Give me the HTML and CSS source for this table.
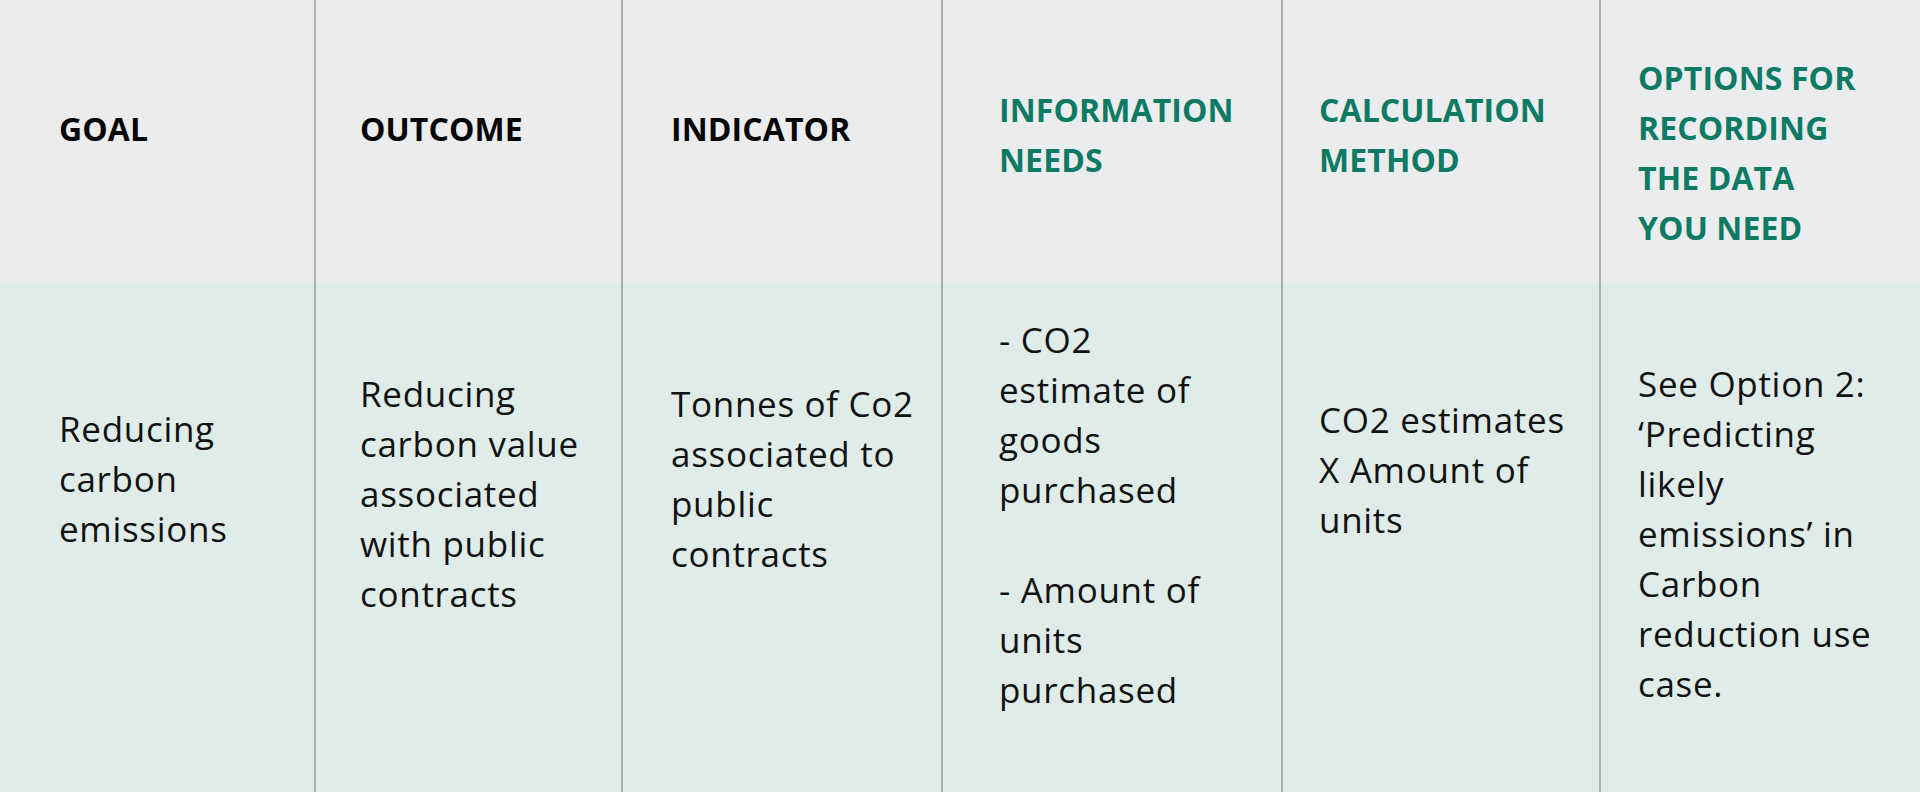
FILE: index.html
```html
<!DOCTYPE html>
<html lang="en">
<head>
<meta charset="utf-8">
<title>Carbon reduction indicators</title>
<link rel="stylesheet" href="styles.css">
</head>
<body>
<div class="table">
  <div class="cell head col1 h1l">GOAL</div>
  <div class="cell head col2 h1l">OUTCOME</div>
  <div class="cell head col3 h1l">INDICATOR</div>
  <div class="cell head col4 h2l green">INFORMATION<br>NEEDS</div>
  <div class="cell head col5 h2l green">CALCULATION<br>METHOD</div>
  <div class="cell head col6 h4l green">OPTIONS FOR<br>RECORDING<br>THE DATA<br>YOU NEED</div>

  <div class="cell data col1 b1">Reducing<br>carbon<br>emissions</div>
  <div class="cell data col2 b2">Reducing<br>carbon value<br>associated<br>with public<br>contracts</div>
  <div class="cell data col3 b3">Tonnes of Co2<br>associated to<br>public<br>contracts</div>
  <div class="cell data col4 b4">
    <p class="para">- CO2<br>estimate of<br>goods<br>purchased</p>
    <p class="para">- Amount of<br>units<br>purchased</p>
  </div>
  <div class="cell data col5 b5">CO2 estimates<br>X Amount of<br>units</div>
  <div class="cell data col6 b6">See Option 2:<br>‘Predicting<br>likely<br>emissions’ in<br>Carbon<br>reduction use<br>case.</div>
</div>
</body>
</html>
```

FILE: styles.css
```css
html, body {
  margin: 0;
  padding: 0;
}

body {
  font-family: "Open Sans", "Noto Sans", "Liberation Sans", sans-serif;
  background: #e0ece9;
  overflow: hidden;
}

.table {
  display: grid;
  grid-template-columns: 316px 307px 320px 340px 318px 1fr;
  grid-template-rows: 283px 509px;
  width: 1920px;
  height: 792px;
}

.cell {
  box-sizing: border-box;
  border-right: 2px solid #adaeae;
  white-space: nowrap;
}

.cell:nth-child(6n) {
  border-right: none;
}

.head {
  background: #ebecee;
  color: #050505;
  font-weight: 700;
  font-size: 32px;
  line-height: 50px;
  letter-spacing: 0.1px;
}

.data {
  background: #e0ece9;
  color: #121212;
  font-weight: 400;
  font-size: 35px;
  line-height: 50px;
  letter-spacing: 0.7px;
}

.green {
  color: #0d7a64;
}

.para {
  margin: 0 0 50px 0;
}

.para:last-child {
  margin-bottom: 0;
}

/* column text insets */
.col1 { padding-left: 59px; }
.col2 { padding-left: 44px; }
.col3 { padding-left: 48px; }
.col4 { padding-left: 56px; }
.col5 { padding-left: 36px; }
.col6 { padding-left: 37px; }

/* header vertical insets by number of lines */
.h1l { padding-top: 104px; }
.h2l { padding-top: 85px; }
.h4l { padding-top: 53px; }

/* body vertical insets */
.b1 { padding-top: 121px; }
.b2 { padding-top: 86px; }
.b3 { padding-top: 96px; }
.b4 { padding-top: 32px; }
.b5 { padding-top: 112px; }
.b6 { padding-top: 76px; }
```
